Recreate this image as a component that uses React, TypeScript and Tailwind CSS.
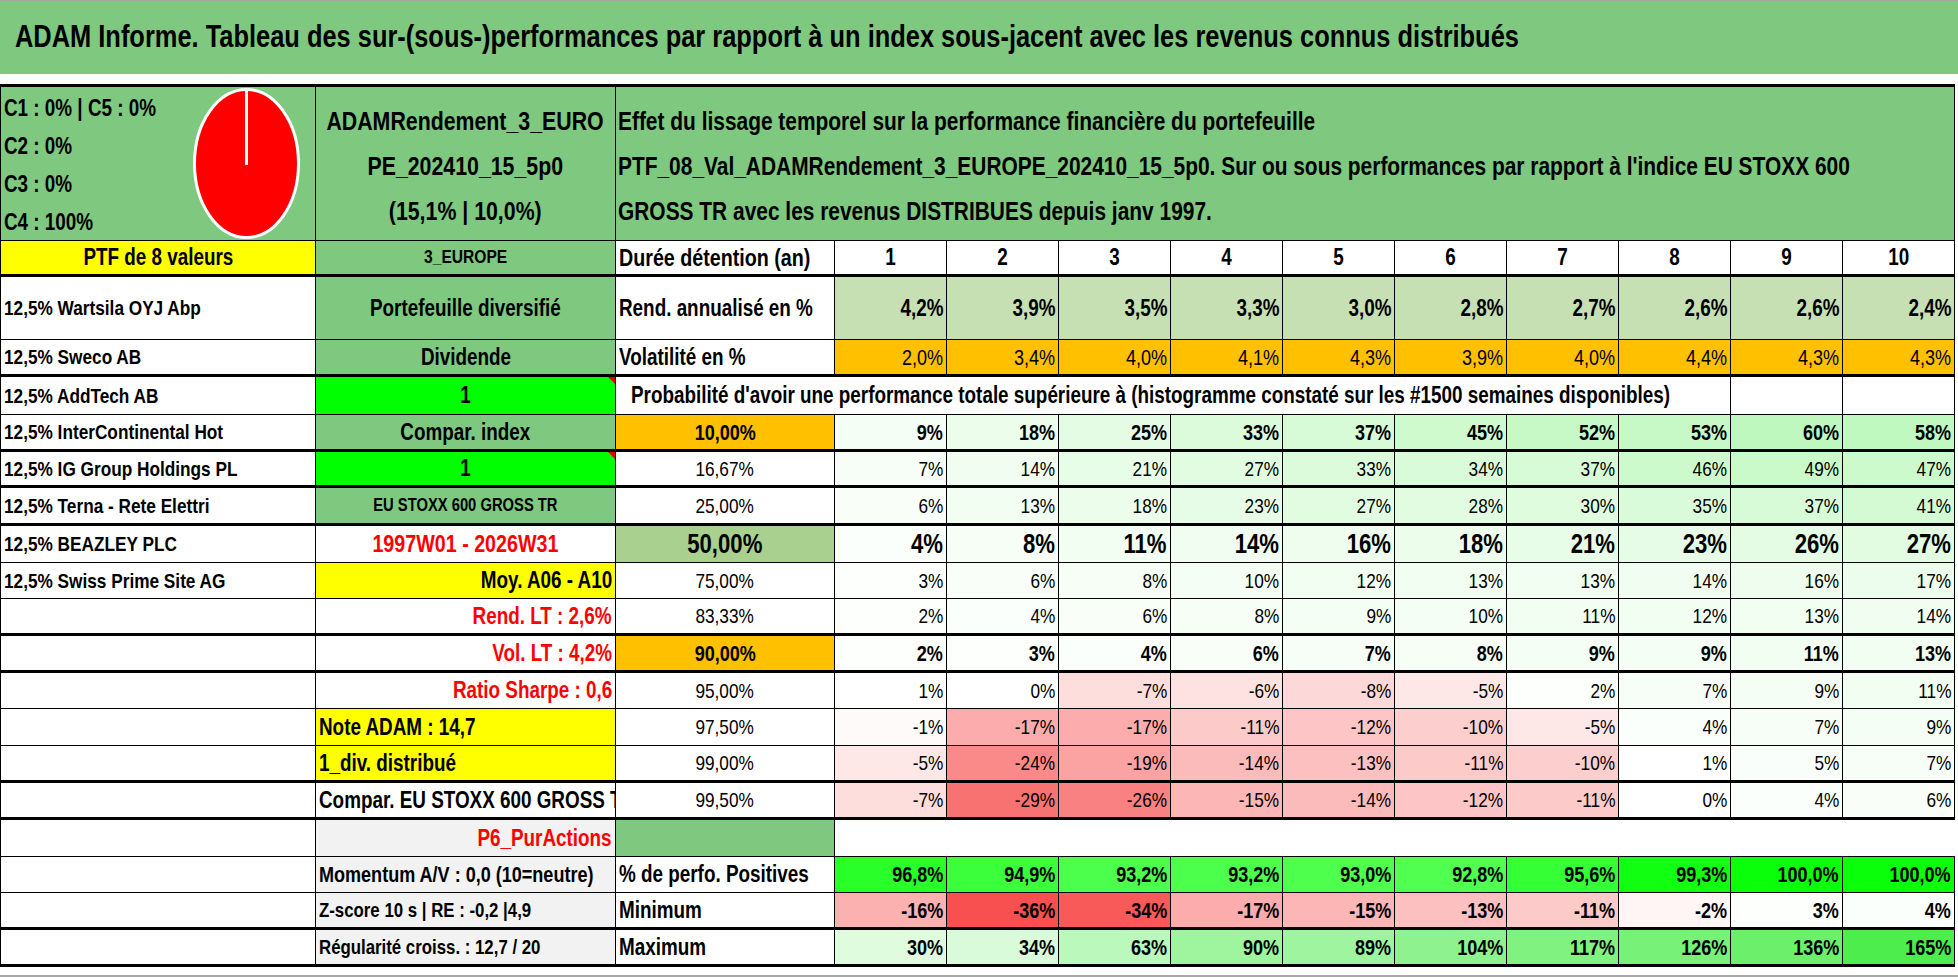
import clsx from 'clsx';
import type { CSSProperties, ReactNode } from 'react';

// Liberation Sans resserrée horizontalement pour retrouver l'aspect étroit de la capture
const FONT = "font-['Liberation_Sans',Arial,sans-serif]";
const GREEN = 'bg-[#7fc87f]';

const COL = {
  a: 'w-[315px]',
  b: 'w-[300px]',
  c: 'w-[219px]',
  n: 'w-[112px]',
};

const rendement = ['4,2%', '3,9%', '3,5%', '3,3%', '3,0%', '2,8%', '2,7%', '2,6%', '2,6%', '2,4%'];
const volatilite = ['2,0%', '3,4%', '4,0%', '4,1%', '4,3%', '3,9%', '4,0%', '4,4%', '4,3%', '4,3%'];

const probas: Record<string, number[]> = {
  p10: [9, 18, 25, 33, 37, 45, 52, 53, 60, 58],
  p16: [7, 14, 21, 27, 33, 34, 37, 46, 49, 47],
  p25: [6, 13, 18, 23, 27, 28, 30, 35, 37, 41],
  p50: [4, 8, 11, 14, 16, 18, 21, 23, 26, 27],
  p75: [3, 6, 8, 10, 12, 13, 13, 14, 16, 17],
  p83: [2, 4, 6, 8, 9, 10, 11, 12, 13, 14],
  p90: [2, 3, 4, 6, 7, 8, 9, 9, 11, 13],
  p95: [1, 0, -7, -6, -8, -5, 2, 7, 9, 11],
  p97: [-1, -17, -17, -11, -12, -10, -5, 4, 7, 9],
  p99: [-5, -24, -19, -14, -13, -11, -10, 1, 5, 7],
  p995: [-7, -29, -26, -15, -14, -12, -11, 0, 4, 6],
};

const positives = [96.8, 94.9, 93.2, 93.2, 93.0, 92.8, 95.6, 99.3, 100.0, 100.0];
const minimum = [-16, -36, -34, -17, -15, -13, -11, -2, 3, 4];
const maximum = [30, 34, 63, 90, 89, 104, 117, 126, 136, 165];

function mix(a: number[], b: number[], t: number) {
  const c = a.map((x, i) => Math.round(x + (b[i] - x) * t));
  return `rgb(${c[0]}, ${c[1]}, ${c[2]})`;
}

// échelle de couleurs façon mise en forme conditionnelle
function heat(v: number) {
  if (v >= 0) return mix([255, 255, 255], [60, 235, 60], Math.min(v / 180, 1));
  return mix([255, 255, 255], [248, 80, 80], Math.min(-v / 36, 1));
}

function posColor(v: number) {
  const t = (v - 92.8) / 7.2;
  const x = Math.round(80 - 70 * t);
  return `rgb(${x}, 255, ${x})`;
}

function fr(v: number, digits = 0) {
  return v.toFixed(digits).replace('.', ',') + '%';
}

function T({ a = 'l', children }: { a?: 'l' | 'c' | 'r'; children: ReactNode }) {
  return (
    <span
      className={clsx(
        'inline-block shrink-0 scale-x-[0.82] whitespace-nowrap',
        a === 'l' && 'origin-left',
        a === 'c' && 'origin-center',
        a === 'r' && 'origin-right',
      )}
    >
      {children}
    </span>
  );
}

function Row({ h, thick, children }: { h: string; thick?: boolean; children: ReactNode }) {
  return (
    <div className={clsx('flex border-black', h, thick ? 'border-b-[3px]' : 'border-b')}>
      {children}
    </div>
  );
}

function Cell({
  w,
  bg = 'bg-white',
  a = 'l',
  className = '',
  style,
  noR,
  flag,
  children,
}: {
  w: string;
  bg?: string;
  a?: 'l' | 'c' | 'r';
  className?: string;
  style?: CSSProperties;
  noR?: boolean;
  flag?: boolean;
  children?: ReactNode;
}) {
  return (
    <div
      style={style}
      className={clsx(
        'relative flex h-full shrink-0 items-center overflow-hidden whitespace-nowrap border-black',
        w,
        bg,
        !noR && 'border-r',
        a === 'l' && 'justify-start pl-[3px]',
        a === 'c' && 'justify-center',
        a === 'r' && 'justify-end pr-[3px]',
        className,
      )}
    >
      {children !== undefined && <T a={a}>{children}</T>}
      {flag && (
        <span className="absolute right-0 top-0 h-0 w-0 border-l-[7px] border-t-[7px] border-l-transparent border-t-[#e00000]" />
      )}
    </div>
  );
}

type Kind = 'n' | 'b' | 'big';

const kindCls = (kind: Kind) =>
  clsx(
    kind === 'n' && 'text-[21px] font-normal',
    kind === 'b' && 'text-[22px] font-bold',
    kind === 'big' && 'text-[27px] font-bold',
  );

function Nums({ vals, kind = 'n' }: { vals: number[]; kind?: Kind }) {
  return (
    <>
      {vals.map((v, i) => (
        <Cell key={i} w={COL.n} a="r" style={{ backgroundColor: heat(v) }} className={kindCls(kind)}>
          {fr(v)}
        </Cell>
      ))}
    </>
  );
}

function Seuil({ label, bg = 'bg-white', kind = 'n' }: { label: string; bg?: string; kind?: Kind }) {
  return (
    <Cell w={COL.c} a="c" bg={bg} className={kindCls(kind)}>
      {label}
    </Cell>
  );
}

function Societe({ name }: { name?: string }) {
  return (
    <Cell w={COL.a} className="text-[21px] font-bold">
      {name}
    </Cell>
  );
}

function Pie() {
  return (
    <svg width="107" height="151" viewBox="0 0 107 151" className="mr-[15px] mt-px shrink-0 self-start">
      <ellipse cx="53.5" cy="75.5" rx="52" ry="74" fill="#ff0000" stroke="#ffffff" strokeWidth="3" />
      <line x1="53.5" y1="3" x2="53.5" y2="77" stroke="#ffffff" strokeWidth="3" />
    </svg>
  );
}

export default function App() {
  return (
    <div className={clsx('min-h-screen w-[1958px] overflow-hidden bg-white text-black', FONT)}>
      {/* Titre */}
      <div className={clsx('flex h-[74px] items-center border-t border-[#a6a6a6] pl-[15px]', GREEN)}>
        <h1 className="text-[31px] font-bold">
          <T>
            ADAM Informe. Tableau des sur-(sous-)performances par rapport à un index sous-jacent avec les revenus connus distribués
          </T>
        </h1>
      </div>
      <div className="h-[10px]" />

      <div className="w-[1955px] border-l border-black">
        {/* En-tête */}
        <div className="flex h-[157px] border-y border-t-[3px] border-black">
          <div className={clsx('flex h-full w-[315px] shrink-0 border-r border-black', GREEN)}>
            <div className="flex-1 pl-[3px] pt-[2px] text-[23px] font-bold leading-[38px]">
              <div><T>C1 : 0% | C5 : 0%</T></div>
              <div><T>C2 : 0%</T></div>
              <div><T>C3 : 0%</T></div>
              <div><T>C4 : 100%</T></div>
            </div>
            <Pie />
          </div>
          <div
            className={clsx(
              'flex h-full w-[300px] shrink-0 flex-col items-center overflow-hidden border-r border-black pt-[12px] text-[26px] font-bold leading-[45px]',
              GREEN,
            )}
          >
            <T a="c">ADAMRendement_3_EURO</T>
            <T a="c">PE_202410_15_5p0</T>
            <T a="c">(15,1% | 10,0%)</T>
          </div>
          <div className={clsx('h-full flex-1 overflow-hidden border-r border-black pl-[2px] pt-[12px] text-[25.5px] font-bold leading-[45px]', GREEN)}>
            <div><T>Effet du lissage temporel sur la performance financière du portefeuille</T></div>
            <div>
              <T>PTF_08_Val_ADAMRendement_3_EUROPE_202410_15_5p0. Sur ou sous performances par rapport à l'indice EU STOXX 600</T>
            </div>
            <div><T>GROSS TR avec les revenus DISTRIBUES depuis janv 1997.</T></div>
          </div>
        </div>

        {/* Durée */}
        <Row h="h-[36px]" thick>
          <Cell w={COL.a} a="c" bg="bg-[#ffff00]" className="text-[23px] font-bold">
            PTF de 8 valeurs
          </Cell>
          <Cell w={COL.b} a="c" bg={GREEN} className="text-[19px] font-bold">
            3_EUROPE
          </Cell>
          <Cell w={COL.c} className="text-[24px] font-bold">
            Durée détention (an)
          </Cell>
          {rendement.map((_, i) => (
            <Cell key={i} w={COL.n} a="c" className="text-[23px] font-bold">
              {i + 1}
            </Cell>
          ))}
        </Row>

        {/* Rendement */}
        <Row h="h-[63px]">
          <Societe name="12,5% Wartsila OYJ Abp" />
          <Cell w={COL.b} a="c" bg={GREEN} className="text-[23px] font-bold">
            Portefeuille diversifié
          </Cell>
          <Cell w={COL.c} className="text-[23px] font-bold">
            Rend. annualisé en %
          </Cell>
          {rendement.map((v, i) => (
            <Cell key={i} w={COL.n} a="r" bg="bg-[#c6e0b4]" className="text-[23px] font-bold">
              {v}
            </Cell>
          ))}
        </Row>

        {/* Volatilité */}
        <Row h="h-[37px]" thick>
          <Societe name="12,5% Sweco AB" />
          <Cell w={COL.b} a="c" bg={GREEN} className="text-[23px] font-bold">
            Dividende
          </Cell>
          <Cell w={COL.c} className="text-[23px] font-bold">
            Volatilité en %
          </Cell>
          {volatilite.map((v, i) => (
            <Cell key={i} w={COL.n} a="r" bg="bg-[#ffc000]" className="text-[22px] font-normal">
              {v}
            </Cell>
          ))}
        </Row>

        {/* Probabilité */}
        <Row h="h-[38px]">
          <Societe name="12,5% AddTech AB" />
          <Cell w={COL.b} a="c" bg="bg-[#00ff00]" className="text-[23px] font-bold" flag>
            1
          </Cell>
          <Cell w="w-[1115px]" a="c" className="pr-[44px] text-[23px] font-bold">
            Probabilité d'avoir une performance totale supérieure à (histogramme constaté sur les #1500 semaines disponibles)
          </Cell>
          <Cell w={COL.n} />
          <Cell w={COL.n} />
        </Row>

        <Row h="h-[37px]" thick>
          <Societe name="12,5% InterContinental Hot" />
          <Cell w={COL.b} a="c" bg={GREEN} className="text-[23px] font-bold">
            Compar. index
          </Cell>
          <Seuil label="10,00%" bg="bg-[#ffc000]" kind="b" />
          <Nums vals={probas.p10} kind="b" />
        </Row>

        <Row h="h-[36px]" thick>
          <Societe name="12,5% IG Group Holdings PL" />
          <Cell w={COL.b} a="c" bg="bg-[#00ff00]" className="text-[23px] font-bold" flag>
            1
          </Cell>
          <Seuil label="16,67%" />
          <Nums vals={probas.p16} />
        </Row>

        <Row h="h-[38px]" thick>
          <Societe name="12,5% Terna - Rete Elettri" />
          <Cell w={COL.b} a="c" bg={GREEN} className="text-[18px] font-bold">
            EU STOXX 600 GROSS TR
          </Cell>
          <Seuil label="25,00%" />
          <Nums vals={probas.p25} />
        </Row>

        <Row h="h-[37px]">
          <Societe name="12,5% BEAZLEY PLC" />
          <Cell w={COL.b} a="c" className="text-[24px] font-bold text-[#ff0000]">
            1997W01 - 2026W31
          </Cell>
          <Seuil label="50,00%" bg="bg-[#a9d08e]" kind="big" />
          <Nums vals={probas.p50} kind="big" />
        </Row>

        <Row h="h-[36px]">
          <Societe name="12,5% Swiss Prime Site AG" />
          <Cell w={COL.b} a="r" bg="bg-[#ffff00]" className="text-[23px] font-bold">
            Moy. A06 - A10
          </Cell>
          <Seuil label="75,00%" />
          <Nums vals={probas.p75} />
        </Row>

        <Row h="h-[37px]" thick>
          <Societe />
          <Cell w={COL.b} a="r" className="text-[23px] font-bold text-[#ff0000]">
            Rend. LT : 2,6%
          </Cell>
          <Seuil label="83,33%" />
          <Nums vals={probas.p83} />
        </Row>

        <Row h="h-[37px]" thick>
          <Societe />
          <Cell w={COL.b} a="r" className="text-[23px] font-bold text-[#ff0000]">
            Vol. LT : 4,2%
          </Cell>
          <Seuil label="90,00%" bg="bg-[#ffc000]" kind="b" />
          <Nums vals={probas.p90} kind="b" />
        </Row>

        <Row h="h-[36px]">
          <Societe />
          <Cell w={COL.b} a="r" className="text-[23px] font-bold text-[#ff0000]">
            Ratio Sharpe : 0,6
          </Cell>
          <Seuil label="95,00%" />
          <Nums vals={probas.p95} />
        </Row>

        <Row h="h-[37px]">
          <Societe />
          <Cell w={COL.b} bg="bg-[#ffff00]" className="text-[23px] font-bold">
            Note ADAM : 14,7
          </Cell>
          <Seuil label="97,50%" />
          <Nums vals={probas.p97} />
        </Row>

        <Row h="h-[37px]" thick>
          <Societe />
          <Cell w={COL.b} bg="bg-[#ffff00]" className="text-[23px] font-bold">
            1_div. distribué
          </Cell>
          <Seuil label="99,00%" />
          <Nums vals={probas.p99} />
        </Row>

        <Row h="h-[37px]" thick>
          <Societe />
          <Cell w={COL.b} className="text-[23px] font-bold">
            Compar. EU STOXX 600 GROSS TR
          </Cell>
          <Seuil label="99,50%" />
          <Nums vals={probas.p995} />
        </Row>

        {/* Statistiques */}
        <Row h="h-[37px]">
          <Societe />
          <Cell w={COL.b} a="r" bg="bg-[#f2f2f2]" className="text-[23px] font-bold text-[#ff0000]">
            P6_PurActions
          </Cell>
          <Cell w={COL.c} bg={GREEN} />
          <Cell w="w-[1120px]" noR />
        </Row>

        <Row h="h-[36px]">
          <Societe />
          <Cell w={COL.b} bg="bg-[#f2f2f2]" className="text-[22px] font-bold">
            Momentum A/V : 0,0 (10=neutre)
          </Cell>
          <Cell w={COL.c} className="text-[23px] font-bold">
            % de perfo. Positives
          </Cell>
          {positives.map((v, i) => (
            <Cell key={i} w={COL.n} a="r" style={{ backgroundColor: posColor(v) }} className="text-[22px] font-bold">
              {fr(v, 1)}
            </Cell>
          ))}
        </Row>

        <Row h="h-[37px]" thick>
          <Societe />
          <Cell w={COL.b} bg="bg-[#f2f2f2]" className="text-[20.5px] font-bold">
            Z-score 10 s | RE : -0,2 |4,9
          </Cell>
          <Cell w={COL.c} className="text-[23px] font-bold">
            Minimum
          </Cell>
          <Nums vals={minimum} kind="b" />
        </Row>

        <Row h="h-[37px]" thick>
          <Societe />
          <Cell w={COL.b} bg="bg-[#f2f2f2]" className="text-[20.5px] font-bold">
            Régularité croiss. : 12,7 / 20
          </Cell>
          <Cell w={COL.c} className="text-[23px] font-bold">
            Maximum
          </Cell>
          <Nums vals={maximum} kind="b" />
        </Row>
      </div>

      <div className="h-[10px] border-b-2 border-[#a6a6a6]" />
    </div>
  );
}
